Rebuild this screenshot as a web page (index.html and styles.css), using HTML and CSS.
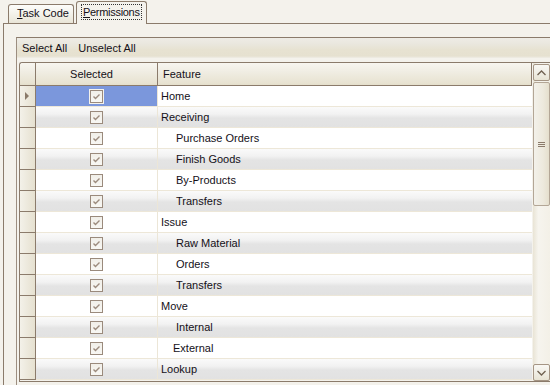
FILE: index.html
```html
<!DOCTYPE html>
<html>
<head>
  <link rel="stylesheet" href="styles.css">
</head>
<body>
  <div class="tabs">
    <div class="tab"><u>T</u>ask Code</div>
    <div class="tab active"><span class="focus"><u>P</u>ermissions</span></div>
  </div>

  <div class="panel">
    <div class="frame">
      <div class="toolbar">
        <span class="tool">Select All</span>
        <span class="tool">Unselect All</span>
      </div>

      <div class="grid">
        <div class="table">
          <div class="head">
            <div class="hcell corner"></div>
            <div class="hcell sel">Selected</div>
            <div class="hcell feat">Feature</div>
          </div>
          <div id="rows"></div>
        </div>

        <div class="vscroll">
          <div class="sbtn">
            <svg width="9" height="6" viewBox="0 0 9 6"><polyline points="0.5,5 4.5,1 8.5,5" fill="none" stroke="#6f6050" stroke-width="1.3"/></svg>
          </div>
          <div class="thumb">
            <span class="grip"></span><span class="grip"></span><span class="grip"></span>
          </div>
          <div class="track"></div>
          <div class="sbtn">
            <svg width="9" height="6" viewBox="0 0 9 6"><polyline points="0.5,1 4.5,5 8.5,1" fill="none" stroke="#6f6050" stroke-width="1.3"/></svg>
          </div>
        </div>
      </div>
    </div>
  </div>

  <script>
    // feature list: name + indent level
    const features = [
      ['Home', ''],
      ['Receiving', ''],
      ['Purchase Orders', 'sub'],
      ['Finish Goods', 'sub'],
      ['By-Products', 'sub'],
      ['Transfers', 'sub'],
      ['Issue', ''],
      ['Raw Material', 'sub'],
      ['Orders', 'sub'],
      ['Transfers', 'sub'],
      ['Move', ''],
      ['Internal', 'sub'],
      ['External', 'sub2'],
      ['Lookup', '']
    ];

    const check = '<span class="check"><svg width="11" height="11" viewBox="0 0 11 11"><polyline points="2.5,5.5 4.5,7.5 8.5,3.5" fill="none" stroke="#9c8b7d" stroke-width="1.4"/></svg></span>';

    const rows = document.getElementById('rows');
    features.forEach(function(f, i) {
      const row = document.createElement('div');
      row.className = 'row' + (i % 2 ? ' alt' : '') + (i === 0 ? ' current' : '');
      row.innerHTML =
        '<div class="rhead">' + (i === 0 ? '<span class="arrow"></span>' : '') + '</div>' +
        '<div class="cell sel">' + check + '</div>' +
        '<div class="cell feat ' + f[1] + '">' + f[0] + '</div>';
      rows.appendChild(row);
    });
  </script>
</body>
</html>
```

FILE: styles.css
```css
body {
  margin: 0;
  width: 550px;
  height: 385px;
  overflow: hidden;
  background-color: #f4f2ec;
  font-family: "Liberation Sans", Arial, sans-serif;
  font-size: 11px;
  color: #141018;
}
.tabs {
  display: flex;
  align-items: flex-end;
  height: 23px;
  padding-left: 8px;
}
.tab {
  box-sizing: border-box;
  width: 66px;
  height: 19px;
  padding-left: 8px;
  line-height: 17px;
  border: 1px solid #8b7b6b;
  border-bottom: none;
  border-radius: 3px 3px 0 0;
  background: linear-gradient(#fdfdfb, #f1efe6 60%, #e9e5d7);
}
.tab.active {
  position: relative;
  z-index: 1;
  width: 71px;
  height: 23px;
  margin-left: 2px;
  margin-bottom: -1px;
  padding-left: 5px;
  padding-top: 3px;
  line-height: 14px;
  letter-spacing: -0.3px;
  background: #f4f2ec;
}
.focus {
  display: inline-block;
  padding: 0 1px;
  outline: 1px dotted #333;
}
.panel {
  margin-left: 3px;
  height: 362px;
  padding: 13px 0 0 12px;
  border-top: 1px solid #8b7b6b;
  border-left: 1px solid #8b7b6b;
}
.frame {
  height: 348px;
  border-top: 1px solid #8b7b6b;
  border-left: 1px solid #9c8e80;
}
.toolbar {
  display: flex;
  align-items: center;
  height: 20px;
  padding-left: 5px;
  background: linear-gradient(#eeece6, #eae7de 30%, #e7e2d1 60%, #e6e1d0 90%, #efede6);
}
.tool {
  margin-right: 11px;
}
.grid {
  display: flex;
  margin: 4px 0 0 2px;
  height: 318px;
  border: 1px solid #8b7b6b;
  border-right: none;
  border-top-left-radius: 3px;
}
.table {
  width: 512px;
}
.head,
.row {
  display: grid;
  grid-template-columns: 16px 122px 1fr;
}
.hcell {
  box-sizing: border-box;
  height: 23px;
  line-height: 22px;
  border-right: 1px solid #8b7b6b;
  border-bottom: 1px solid #8b7b6b;
  background: linear-gradient(#f8f6f0, #f0ede3 40%, #e8e3d2 90%, #e4dfcc);
}
.hcell.corner {
  border-top-left-radius: 3px;
}
.hcell.sel {
  text-align: center;
  padding-right: 10px;
}
.hcell.feat {
  padding-left: 5px;
}
.rhead {
  box-sizing: border-box;
  height: 21px;
  border-right: 1px solid #8b7b6b;
  border-bottom: 1px solid #8b7b6b;
  background: linear-gradient(to right, #f3f1e9, #ebe7da 60%, #e6e1d0);
  display: flex;
  align-items: center;
  padding-left: 5px;
}
.arrow {
  width: 0;
  height: 0;
  border-top: 4px solid transparent;
  border-bottom: 4px solid transparent;
  border-left: 4px solid #8a7a6a;
}
.cell {
  box-sizing: border-box;
  height: 21px;
  line-height: 20px;
  border-bottom: 1px solid #ede7d8;
  background: #ffffff;
}
.row.alt .cell {
  background: linear-gradient(#fafafa, #f2f2f2 35%, #e4e4e4 55%, #e2e2e2);
}
.cell.sel {
  border-right: 1px solid #ece6d7;
  display: flex;
  align-items: center;
  justify-content: center;
}
.row.current .cell.sel {
  background: #7b97dc;
}
.row.current .check {
  box-shadow: 0 0 0 1px #f4f2ec;
}
.cell.feat {
  padding-left: 3px;
}
.cell.feat.sub {
  padding-left: 18px;
}
.cell.feat.sub2 {
  padding-left: 15px;
}
.check {
  box-sizing: border-box;
  width: 13px;
  height: 13px;
  border: 1px solid #9a8a7c;
  background: linear-gradient(#f1efe9, #f8f7f3);
  display: flex;
  align-items: center;
  justify-content: center;
}
.vscroll {
  width: 18px;
  display: flex;
  flex-direction: column;
  padding: 1px 0 0 1px;
  box-sizing: border-box;
  background: linear-gradient(to right, #f4f2ec 1px, #e9e4d5 1px, #f6f4ee 35%, #f3f0e7);
}
.sbtn {
  box-sizing: border-box;
  height: 17px;
  border: 1px solid #a59584;
  border-radius: 2px;
  background: linear-gradient(#f9f8f4, #efece2 60%, #e8e3d4);
  display: flex;
  align-items: center;
  justify-content: center;
}
.thumb {
  box-sizing: border-box;
  height: 124px;
  margin-top: 1px;
  border: 1px solid #b3a696;
  border-radius: 2px;
  background: linear-gradient(to right, #f3f1ea, #ede9dd 60%, #e5dfcd);
  display: flex;
  flex-direction: column;
  align-items: center;
  justify-content: center;
  gap: 1px;
}
.grip {
  width: 7px;
  height: 1px;
  background: #8b7b6b;
}
.track {
  flex: 1;
}
```
